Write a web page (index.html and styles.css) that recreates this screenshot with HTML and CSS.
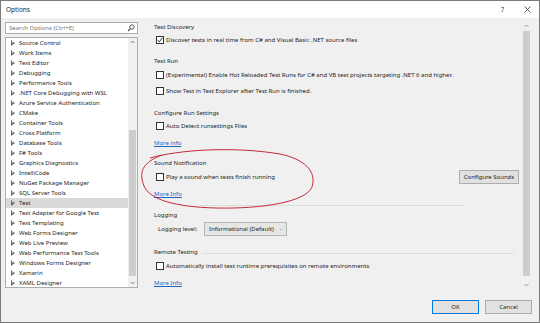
FILE: index.html
```html
<!DOCTYPE html>
<html lang="en">
<head>
    <meta charset="UTF-8">
    <meta name="viewport" content="width=device-width, initial-scale=1.0">
    <title>Options</title>
    <link rel="stylesheet" href="styles.css">
</head>
<body>
    <div class="window">
        <div class="titlebar">
            <span class="title">Options</span>
            <span class="help">?</span>
            <svg class="close" width="7" height="7" viewBox="0 0 7 7"><path d="M0.5 0.5L6.5 6.5M6.5 0.5L0.5 6.5" stroke="#333" stroke-width="0.8"/></svg>
        </div>

        <div class="main">
            <div class="left">
                <div class="search">
                    <span>Search Options (Ctrl+E)</span>
                    <svg width="8" height="8" viewBox="0 0 8 8"><circle cx="5" cy="3" r="2.2" fill="none" stroke="#444" stroke-width="0.9"/><path d="M3.4 4.6L1 7" stroke="#444" stroke-width="1.1"/></svg>
                </div>
                <div class="tree">
                    <ul class="items">
                        <li><span class="arrow"></span>Source Control</li>
                        <li><span class="arrow"></span>Work Items</li>
                        <li><span class="arrow"></span>Text Editor</li>
                        <li><span class="arrow"></span>Debugging</li>
                        <li><span class="arrow"></span>Performance Tools</li>
                        <li><span class="arrow"></span>.NET Core Debugging with WSL</li>
                        <li><span class="arrow"></span>Azure Service Authentication</li>
                        <li><span class="arrow"></span>CMake</li>
                        <li><span class="arrow"></span>Container Tools</li>
                        <li><span class="arrow"></span>Cross Platform</li>
                        <li><span class="arrow"></span>Database Tools</li>
                        <li><span class="arrow"></span>F# Tools</li>
                        <li><span class="arrow"></span>Graphics Diagnostics</li>
                        <li><span class="arrow"></span>IntelliCode</li>
                        <li><span class="arrow"></span>NuGet Package Manager</li>
                        <li><span class="arrow"></span>SQL Server Tools</li>
                        <li class="selected"><span class="arrow"></span>Test</li>
                        <li><span class="arrow"></span>Test Adapter for Google Test</li>
                        <li><span class="arrow"></span>Text Templating</li>
                        <li><span class="arrow"></span>Web Forms Designer</li>
                        <li><span class="arrow"></span>Web Live Preview</li>
                        <li><span class="arrow"></span>Web Performance Test Tools</li>
                        <li><span class="arrow"></span>Windows Forms Designer</li>
                        <li><span class="arrow"></span>Xamarin</li>
                        <li><span class="arrow"></span>XAML Designer</li>
                    </ul>
                    <div class="scrollbar tree-scroll">
                        <svg width="9" height="8" viewBox="0 0 9 8"><path d="M2.5 5L4.5 3L6.5 5" fill="none" stroke="#666" stroke-width="0.8"/></svg>
                        <div class="track"><div class="thumb"></div></div>
                        <svg width="9" height="8" viewBox="0 0 9 8"><path d="M2.5 3L4.5 5L6.5 3" fill="none" stroke="#666" stroke-width="0.8"/></svg>
                    </div>
                </div>
            </div>

            <div class="right">
                <div class="content">
                    <div class="heading">Test Discovery</div>
                    <div class="option gap-3">
                        <span class="check checked"><svg width="8" height="8" viewBox="0 0 8 8"><path d="M1.6 4.2L3.3 5.8L6.4 1.8" fill="none" stroke="#222" stroke-width="1"/></svg></span>
                        Discover tests in real time from C# and Visual Basic .NET source files
                    </div>

                    <div class="heading gap-11">Test Run</div>
                    <div class="option gap-4"><span class="check"></span>(Experimental) Enable Hot Reloaded Test Runs for C# and VB test projects targeting .NET 6 and higher.</div>
                    <div class="option gap-6"><span class="check"></span>Show Test in Test Explorer after Test Run is finished.</div>

                    <div class="heading gap-12">Configure Run Settings</div>
                    <div class="option gap-3"><span class="check"></span>Auto Detect runsettings Files</div>
                    <a class="link gap-7" href="#">More info</a>

                    <div class="heading gap-10">Sound Notification</div>
                    <div class="option gap-4">
                        <span class="check"></span>Play a sound when tests finish running
                        <button class="btn sounds">Configure Sounds</button>
                    </div>
                    <a class="link gap-7" href="#">More Info</a>

                    <div class="rule"></div>
                    <div class="heading gap-4">Logging</div>
                    <div class="field gap-4">
                        <span>Logging level:</span>
                        <div class="select">Informational (Default)<span class="caret">⌄</span></div>
                    </div>

                    <div class="heading lined gap-13">Remote Testing</div>
                    <div class="option gap-4"><span class="check"></span>Automatically install test runtime prerequisites on remote environments</div>
                    <a class="link gap-7" href="#">More Info</a>
                </div>
                <div class="scrollbar page-scroll">
                    <svg width="9" height="8" viewBox="0 0 9 8"><path d="M2.5 5L4.5 3L6.5 5" fill="none" stroke="#888" stroke-width="0.8"/></svg>
                    <div class="track"><div class="thumb"></div></div>
                    <svg width="9" height="8" viewBox="0 0 9 8"><path d="M2.5 3L4.5 5L6.5 3" fill="none" stroke="#888" stroke-width="0.8"/></svg>
                </div>
            </div>
        </div>

        <div class="footer">
            <button class="btn primary">OK</button>
            <button class="btn">Cancel</button>
        </div>

        <svg class="scribble" width="540" height="323" viewBox="0 0 540 323">
            <path d="M150 158 C178 150 232 146 280 154 C304 159 317 171 312 187 C306 202 262 209 216 208 C176 207 150 200 144 186 C139 173 141 163 162 155" fill="none" stroke="#c42a3a" stroke-width="1"/>
        </svg>
    </div>
</body>
</html>
```

FILE: styles.css
```css
body {
    margin: 0;
    font-family: "Noto Sans", "Liberation Sans", sans-serif;
    font-size: 6px;
    color: #1e1e1e;
}
.window {
    position: relative;
    width: 540px;
    height: 323px;
    box-sizing: border-box;
    border: 1px solid #7a7a7a;
    background-color: #f0f0f0;
    display: flex;
    flex-direction: column;
    overflow: hidden;
}
.titlebar {
    height: 17px;
    background-color: #fff;
    display: flex;
    align-items: center;
    padding-left: 5px;
    font-size: 6.4px;
}
.title {
    flex: 1;
}
.help {
    margin-right: 20px;
}
.close {
    margin-right: 8px;
}
.main {
    height: 271px;
    display: flex;
    padding: 4px 8px 0 4px;
    box-sizing: border-box;
}
.left {
    width: 133px;
    display: flex;
    flex-direction: column;
    gap: 3px;
}
.search {
    height: 12px;
    box-sizing: border-box;
    border: 1px solid #abadb3;
    background-color: #fff;
    display: flex;
    align-items: center;
    justify-content: space-between;
    padding: 0 2px 0 3px;
    color: #777;
}
.tree {
    height: 251px;
    box-sizing: border-box;
    border: 1px solid #abadb3;
    background-color: #fff;
    display: flex;
}
.items {
    list-style: none;
    margin: 0;
    padding: 0;
    flex: 1;
}
.items li {
    height: 10px;
    line-height: 10px;
    display: flex;
    align-items: center;
    white-space: nowrap;
}
.items li.selected {
    background-color: #dadada;
}
.arrow {
    position: relative;
    width: 13px;
    height: 10px;
    flex: none;
}
.arrow::before,
.arrow::after {
    content: "";
    position: absolute;
    top: 2px;
    left: 5px;
    border-style: solid;
    border-color: transparent;
    border-width: 3px 0 3px 4px;
    border-left-color: #666;
}
.arrow::after {
    top: 3.4px;
    left: 5.8px;
    border-width: 1.6px 0 1.6px 2.1px;
    border-left-color: #fff;
}
.selected .arrow::after {
    border-left-color: #dadada;
}
.scrollbar {
    width: 9px;
    display: flex;
    flex-direction: column;
    background-color: #f0f0f0;
}
.scrollbar svg {
    flex: none;
}
.track {
    flex: 1;
    position: relative;
}
.thumb {
    position: absolute;
    left: 1px;
    right: 1px;
    background-color: #cdcdcd;
}
.tree-scroll .thumb {
    top: 84px;
    bottom: 3px;
}
.page-scroll {
    height: 267px;
}
.page-scroll .thumb {
    top: 1px;
    bottom: 5px;
}
.right {
    flex: 1;
    margin-left: 7px;
    display: flex;
}
.content {
    flex: 1;
    display: flex;
    flex-direction: column;
    align-items: flex-start;
    padding-left: 9px;
}
.heading {
    height: 10px;
    line-height: 10px;
    align-self: stretch;
}
.heading.lined {
    display: flex;
    align-items: center;
}
.heading.lined::after {
    content: "";
    flex: 1;
    height: 1px;
    margin: 2px 8px 0 4px;
    background-color: #dcdcdc;
}
.option {
    height: 10px;
    display: flex;
    align-items: center;
    align-self: stretch;
    padding-left: 2px;
    white-space: nowrap;
}
.check {
    width: 8px;
    height: 8px;
    box-sizing: border-box;
    border: 1px solid #333;
    background-color: #fff;
    margin-right: 2px;
    display: flex;
    align-items: center;
    justify-content: center;
    flex: none;
}
.check svg {
    flex: none;
}
.link {
    height: 10px;
    line-height: 10px;
    color: #1a66c4;
    text-decoration: underline;
}
.rule {
    margin: 6px 0 0 46px;
    width: 265px;
    height: 1px;
    background-color: #dcdcdc;
}
.field {
    height: 10px;
    display: flex;
    align-items: center;
    padding-left: 4px;
}
.select {
    height: 14px;
    width: 83px;
    box-sizing: border-box;
    margin-left: 7px;
    border: 1px solid #b5b5b5;
    background-color: #e6e6e6;
    display: flex;
    align-items: center;
    justify-content: space-between;
    padding: 0 3px 0 4px;
    flex: none;
}
.caret {
    color: #777;
    font-size: 5px;
    margin-top: -3px;
}
.btn {
    font-family: inherit;
    font-size: 6px;
    color: #1e1e1e;
    height: 14px;
    padding: 0;
    border: 1px solid #adadad;
    background-color: #e1e1e1;
    flex: none;
}
.sounds {
    width: 60px;
    margin-left: auto;
    margin-right: 3px;
}
.footer {
    flex: 1;
    display: flex;
    justify-content: flex-end;
    gap: 6px;
    padding: 11px 7px 0 0;
}
.footer .btn {
    width: 47px;
}
.btn.primary {
    border-color: #0078d7;
}
.scribble {
    position: absolute;
    left: -1px;
    top: -1px;
    pointer-events: none;
}
.gap-3 { margin-top: 3px; }
.gap-4 { margin-top: 4px; }
.gap-6 { margin-top: 6px; }
.gap-7 { margin-top: 7px; }
.gap-10 { margin-top: 10px; }
.gap-11 { margin-top: 11px; }
.gap-12 { margin-top: 12px; }
.gap-13 { margin-top: 13px; }
```
